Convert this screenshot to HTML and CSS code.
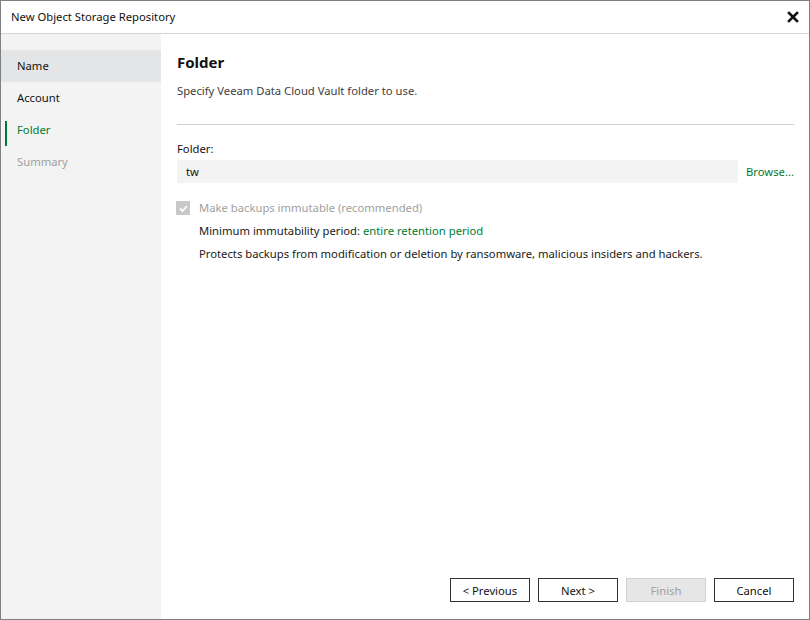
FILE: index.html
```html
<!DOCTYPE html>
<html>
<head>
    <title>New Object Storage Repository</title>
    <link rel="stylesheet" href="styles.css">
</head>
<body>
    <div class="dialog">
        <div class="titlebar">
            <span class="title">New Object Storage Repository</span>
            <svg class="close" width="12" height="12" viewBox="0 0 12 12">
                <path d="M2 2 L10 10 M10 2 L2 10" stroke="#111" stroke-width="2.6" stroke-linecap="square"/>
            </svg>
        </div>
        <div class="main">
            <div class="steps">
                <div class="step selected">Name</div>
                <div class="step">Account</div>
                <div class="step active">Folder</div>
                <div class="step muted">Summary</div>
            </div>
            <div class="content">
                <h2>Folder</h2>
                <p class="desc">Specify Veeam Data Cloud Vault folder to use.</p>
                <hr>
                <div class="label">Folder:</div>
                <div class="field-row">
                    <div class="input">tw</div>
                    <span class="link browse">Browse...</span>
                </div>
                <div class="check-row">
                    <span class="checkbox">
                        <svg width="13" height="13" viewBox="0 0 13 13">
                            <path d="M3 6.5 L5.5 9 L10 4" stroke="#fff" stroke-width="1.8" fill="none"/>
                        </svg>
                    </span>
                    <span class="disabled">Make backups immutable (recommended)</span>
                </div>
                <div class="sub">Minimum immutability period: <span class="link">entire retention period</span></div>
                <div class="sub">Protects backups from modification or deletion by ransomware, malicious insiders and hackers.</div>
                <div class="buttons">
                    <button>&lt; Previous</button>
                    <button>Next &gt;</button>
                    <button class="off">Finish</button>
                    <button>Cancel</button>
                </div>
            </div>
        </div>
    </div>
</body>
</html>
```

FILE: styles.css
```css
* { box-sizing: border-box; }
body { margin: 0; font-family: "Noto Sans", "Open Sans", sans-serif; font-size: 11.25px; line-height: 16px; color: #1a1a1a; }
.dialog { width: 810px; height: 620px; border: 1px solid #808080; display: flex; flex-direction: column; background: #fff; }
.titlebar { height: 33px; flex-shrink: 0; border-bottom: 1px solid #d4d4d4; display: flex; align-items: center; justify-content: space-between; padding: 0 10px 0 10px; }
.title { color: #111; }
.main { flex: 1; display: flex; }
.steps { width: 160px; flex-shrink: 0; background: #f2f3f2; padding-top: 16px; }
.step { height: 32px; line-height: 32px; padding-left: 16px; position: relative; color: #111; }
.step.selected { background: #e4e5e6; }
.step.active { color: #007a33; }
.step.active::before { content: ""; position: absolute; left: 4px; top: 7px; width: 2px; height: 25px; background: #007a33; }
.step.muted { color: #a0a0a0; }
.content { flex: 1; padding: 16px 17px 17px 16px; display: flex; flex-direction: column; }
h2 { margin: 0; font-size: 15px; font-weight: bold; height: 24px; line-height: 24px; color: #111; }
.desc { margin: 9px 0 0 0; color: #404040; }
hr { border: none; border-top: 1px solid #d0d0d0; margin: 25px 0 0 0; }
.label { margin-top: 16px; color: #111; }
.field-row { display: flex; align-items: center; margin-top: 3px; }
.input { width: 561px; height: 23px; line-height: 23px; background: #f2f3f2; padding-left: 9px; color: #111; }
.browse { margin-left: 8px; }
.link { color: #007a33; }
.check-row { display: flex; align-items: center; margin-top: 17px; }
.checkbox { width: 14px; height: 14px; background: #c8c8c8; margin-left: -1px; margin-right: 9px; display: flex; align-items: center; justify-content: center; }
.disabled { color: #a0a0a0; }
.sub { margin-left: 22px; margin-top: 7px; }
.buttons { margin-top: auto; display: flex; justify-content: flex-end; gap: 8px; }
button { width: 80px; height: 24px; background: #fff; border: 1px solid #333; font-family: inherit; font-size: 11.25px; color: #111; padding: 0; }
button.off { background: #e6e6e6; border-color: #d0d0d0; color: #a0a0a0; }
```
